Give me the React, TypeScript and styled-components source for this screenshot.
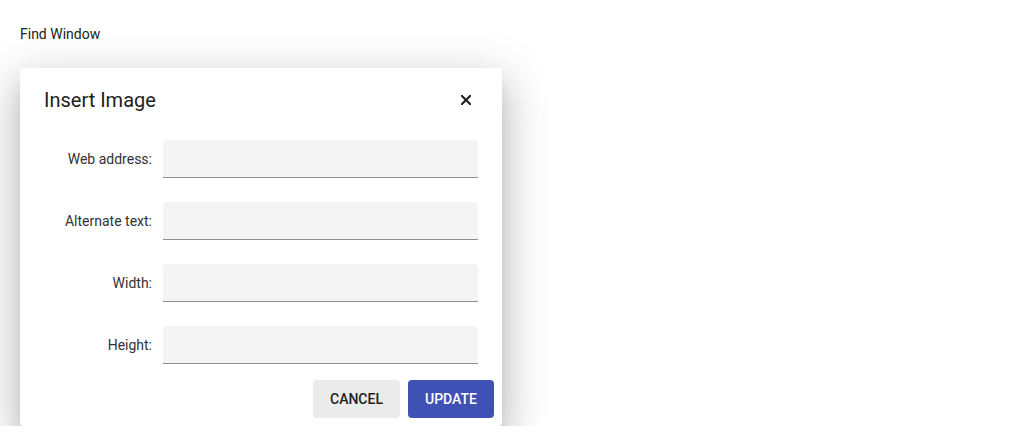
import React from 'react'
import styled, {createGlobalStyle} from 'styled-components'

const GlobalStyle = createGlobalStyle`
  html, body {
    margin: 0;
    padding: 0;
    background: #fff;
    font-family: Roboto, "Liberation Sans", Arial, sans-serif;
  }
`

const Page = styled.div`
  padding: 24px 20px 0 20px;
`

const FindLink = styled.div`
  font-size: 14px;
  line-height: 20px;
  color: #212121;
  margin-bottom: 24px;
`

const Dialog = styled.div`
  width: 482px;
  box-sizing: border-box;
  background: #fff;
  border-radius: 4px;
  padding: 20px 8px 8px 24px;
  box-shadow:
    0px 11px 15px -7px rgba(0, 0, 0, 0.2),
    0px 24px 38px 3px rgba(0, 0, 0, 0.14),
    0px 9px 46px 8px rgba(0, 0, 0, 0.12);
`

const Header = styled.div`
  display: flex;
  align-items: center;
  justify-content: space-between;
  height: 24px;
  padding-right: 23px;
`

const Title = styled.h2`
  margin: 0;
  font-size: 20px;
  font-weight: 400;
  line-height: 24px;
  color: #212121;
`

const CloseButton = styled.button`
  border: 0;
  background: none;
  padding: 0;
  width: 10px;
  height: 10px;
  display: flex;
  cursor: pointer;
`

const Form = styled.div`
  display: grid;
  grid-template-columns: 108px 315px;
  column-gap: 11px;
  row-gap: 24px;
  margin-top: 28px;
`

const Label = styled.label`
  font-size: 14px;
  color: #333;
  text-align: right;
  align-self: center;
`

const Input = styled.input`
  box-sizing: border-box;
  height: 38px;
  border: 0;
  border-bottom: 1px solid #8f8f8f;
  border-radius: 4px 4px 0 0;
  background: #f4f4f4;
  outline: none;
  padding: 0 12px;
  font-family: inherit;
  font-size: 14px;
`

const Actions = styled.div`
  display: flex;
  justify-content: flex-end;
  gap: 8px;
  margin-top: 16px;
`

const Button = styled.button<{$primary?: boolean}>`
  height: 38px;
  min-width: ${(p) => (p.$primary ? '86px' : '87px')};
  padding: 0 16px;
  border: 0;
  border-radius: 4px;
  font-family: inherit;
  font-size: 14px;
  font-weight: 500;
  text-transform: uppercase;
  background: ${(p) => (p.$primary ? '#3f51b5' : '#ebebeb')};
  color: ${(p) => (p.$primary ? '#fff' : '#222')};
  cursor: pointer;
`

const fields = ['Web address:', 'Alternate text:', 'Width:', 'Height:']

export default function App() {
  return (
    <Page>
      <GlobalStyle />
      <FindLink>Find Window</FindLink>
      <Dialog>
        <Header>
          <Title>Insert Image</Title>
          <CloseButton aria-label="Close">
            <svg width="10" height="10" viewBox="0 0 10 10">
              <path d="M1 1L9 9M9 1L1 9" stroke="#212121" strokeWidth="2.2" strokeLinecap="square" />
            </svg>
          </CloseButton>
        </Header>
        <Form>
          {fields.map((f) => (
            <React.Fragment key={f}>
              <Label>{f}</Label>
              <Input />
            </React.Fragment>
          ))}
        </Form>
        <Actions>
          <Button>Cancel</Button>
          <Button $primary>Update</Button>
        </Actions>
      </Dialog>
    </Page>
  )
}
